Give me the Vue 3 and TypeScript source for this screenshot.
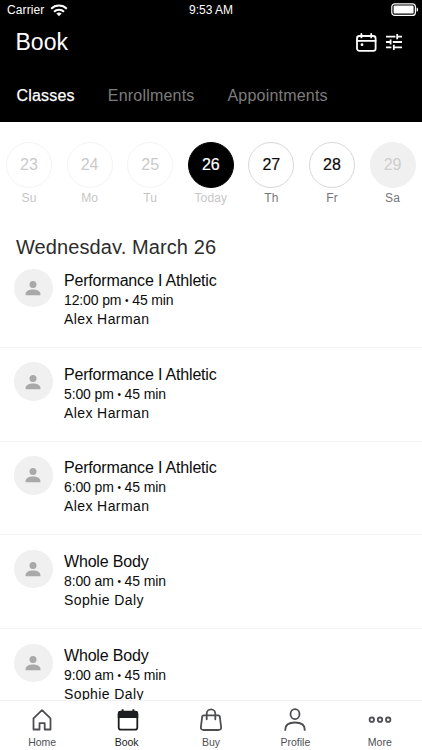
<script setup lang="ts">
interface Day { n: number; label: string; state: 'past' | 'today' | 'open' | 'closed' }
interface Session { title: string; time: string; coach: string }

const days: Day[] = [
  { n: 23, label: 'Su', state: 'past' },
  { n: 24, label: 'Mo', state: 'past' },
  { n: 25, label: 'Tu', state: 'past' },
  { n: 26, label: 'Today', state: 'today' },
  { n: 27, label: 'Th', state: 'open' },
  { n: 28, label: 'Fr', state: 'open' },
  { n: 29, label: 'Sa', state: 'closed' },
]
const sessions: Session[] = [
  { title: 'Performance I Athletic', time: '12:00 pm', coach: 'Alex Harman' },
  { title: 'Performance I Athletic', time: '5:00 pm', coach: 'Alex Harman' },
  { title: 'Performance I Athletic', time: '6:00 pm', coach: 'Alex Harman' },
  { title: 'Whole Body', time: '8:00 am', coach: 'Sophie Daly' },
  { title: 'Whole Body', time: '9:00 am', coach: 'Sophie Daly' },
]
const tabs = ['Home', 'Book', 'Buy', 'Profile', 'More']
</script>

<template>
  <div class="screen">
    <header class="top">
      <div class="status">
        <div class="carrier">
          <span>Carrier</span>
          <svg width="18" height="13" viewBox="0 0 18 13" fill="none" stroke="#fff" stroke-width="2">
            <path d="M1.2 4.7a11.2 11.2 0 0 1 15.6 0" />
            <path d="M4 7.8a7.2 7.2 0 0 1 10 0" />
            <path d="M9 12.2L6.4 9.6a3.8 3.8 0 0 1 5.2 0z" fill="#fff" stroke="none" />
          </svg>
        </div>
        <span class="clock">9:53 AM</span>
        <svg class="battery" width="28" height="14" viewBox="0 0 28 14">
          <rect x="0.8" y="0.8" width="23.6" height="11.6" rx="3" fill="none" stroke="#fff" stroke-width="1.2" />
          <rect x="2.6" y="2.6" width="20" height="8" rx="1.2" fill="#fff" />
          <path d="M25.6 4.4c2 .6 2 3.8 0 4.4z" fill="#fff" />
        </svg>
      </div>
      <div class="titlebar">
        <h1>Book</h1>
        <div class="actions">
          <svg width="21" height="19" viewBox="0 0 21 19" fill="none" stroke="#fff" stroke-width="1.8" stroke-linecap="round">
            <rect x="1" y="3" width="18.6" height="14.8" rx="2.4" />
            <path d="M1 7.800h18.600M5.400 1v3.400M15.200 1v3.400" />
            <circle cx="6" cy="11.700" r="1.400" fill="#fff" stroke="none" />
          </svg>
          <svg width="18" height="18" viewBox="0 0 18 18" fill="none" stroke="#fff" stroke-width="1.800">
            <path d="M1 3.600h9.400M12.200 1v5.200M12.200 3.600H17M1 9h4.500M5.600 6.400v5.200M7.800 9H17M1 14.400h5.400M8.800 11.800V17M8.800 14.400H17" />
          </svg>
        </div>
      </div>
      <nav class="kinds">
        <span class="active">Classes</span>
        <span>Enrollments</span>
        <span>Appointments</span>
      </nav>
    </header>

    <section class="days">
      <div v-for="d in days" :key="d.n" class="day" :class="d.state">
        <div class="num">{{ d.n }}</div>
        <div class="lbl">{{ d.label }}</div>
      </div>
    </section>

    <h2>Wednesday, March 26</h2>

    <main class="list">
      <article v-for="(s, i) in sessions" :key="i" class="row">
        <div class="avatar">
          <svg width="16" height="16" viewBox="0 0 16 16" fill="#a9a9a9">
            <circle cx="8" cy="4.400" r="3.500" />
            <path d="M.6 15.200v-1.500C.6 11 4.600 9.500 8 9.500s7.400 1.500 7.400 4.200v1.500z" />
          </svg>
        </div>
        <div class="info">
          <div class="name">{{ s.title }}</div>
          <div class="time">{{ s.time }} <span class="dot">•</span> 45 min</div>
          <div class="coach">{{ s.coach }}</div>
        </div>
      </article>
    </main>

    <nav class="tabs">
      <div v-for="t in tabs" :key="t" class="tab" :class="{ on: t === 'Book' }">
        <svg width="24" height="24" viewBox="0 0 24 24" fill="none" stroke="currentColor" stroke-width="1.8" stroke-linejoin="round">
          <path v-if="t === 'Home'" d="M3.500 10.400L12 2.200l8.500 8.200V21.500h-5.800v-6.300H9.500v6.300h-6z" />
          <g v-else-if="t === 'Book'">
            <rect x="3.700" y="3.700" width="18.600" height="18" rx="2.200" />
            <path d="M2.800 10V5.400q0-2.400 2.400-2.400h15.600q2.400 0 2.400 2.400V10zM6.600 1.200h2V4h-2zM17.400 1.200h2V4h-2z" fill="currentColor" stroke="none" />
          </g>
          <g v-else-if="t === 'Buy'" stroke-linecap="round">
            <path d="M4.600 7.300h14.800q1.200 0 1.400 1.200l1.300 10.500q.3 3-2.700 3H4.600q-3 0-2.700-3L3.200 8.500q.2-1.200 1.400-1.200z" />
            <path d="M7.700 11.300V5.600a4.300 4.300 0 0 1 8.600 0v5.700" />
          </g>
          <g v-else-if="t === 'Profile'">
            <ellipse cx="12" cy="6.200" rx="4.500" ry="5" />
            <path d="M2.300 22.800v-1.300c0-5.200 4.400-7 9.700-7s9.700 1.800 9.700 7v1.300" />
          </g>
          <g v-else>
            <circle cx="3.800" cy="11.700" r="2.200" /><circle cx="12" cy="11.700" r="2.200" /><circle cx="20.200" cy="11.700" r="2.200" />
          </g>
        </svg>
        <span>{{ t }}</span>
      </div>
    </nav>
  </div>
</template>

<style>
body { margin: 0; background: #fff; overflow: hidden; }
</style>

<style scoped>
* { box-sizing: border-box; }
svg { display: block; }
.screen { width: 422px; height: 750px; display: flex; flex-direction: column; overflow: hidden; background: #fff; color: #0c0c0c; font-family: "Liberation Sans", Arial, sans-serif; }
.top { flex: none; height: 122px; background: #000; color: #fff; }
.status { height: 20px; display: grid; grid-template-columns: 1fr auto 1fr; align-items: center; padding: 0 3px 0 7px; font-size: 12px; }
.carrier { display: flex; align-items: center; gap: 6px; letter-spacing: 0.1px; }
.clock { margin-left: -4px; }
.battery { justify-self: end; }
.titlebar { height: 44px; display: flex; align-items: center; justify-content: space-between; padding: 0 19px 0 15.5px; }
h1 { margin: 0; font-size: 23px; font-weight: 400; line-height: 44px; }
.actions { display: flex; align-items: center; gap: 8.5px; }
.kinds { display: flex; height: 64px; padding-left: 16.500px; gap: 33px; font-size: 16px; line-height: 64px; letter-spacing: 0.2px; color: #7d7d7d; }
.kinds .active { color: #fff; -webkit-text-stroke: 0.25px #fff; }
.days { flex: none; height: 112px; display: flex; gap: 14.600px; padding: 19.500px 0 0 6px; }
.day { flex: none; width: 46px; display: flex; flex-direction: column; align-items: center; }
.num { width: 46px; height: 46px; border-radius: 50%; border: 1px solid #d8d8d8; display: flex; align-items: center; justify-content: center; font-size: 16px; }
.lbl { margin-top: 2.500px; font-size: 12px; line-height: 16px; color: #777; letter-spacing: 0.1px; }
.past .num { border-color: #f4f4f4; color: #cacaca; }
.past .lbl, .today .lbl { color: #c6c6c6; }
.today .num { background: #000; border-color: #000; color: #fff; -webkit-text-stroke: 0.2px #fff; }
.closed .num { background: #f0f0f0; border-color: #f0f0f0; color: #cecece; }
.open .num { -webkit-text-stroke: 0.2px #0c0c0c; }
h2 { flex: none; margin: 0; height: 20px; overflow: hidden; padding-left: 16px; font-size: 20px; font-weight: 400; line-height: 26px; letter-spacing: 0.1px; color: #2c2c2c; }
.list { flex: 1; min-height: 0; overflow: hidden; }
.row { height: 93.750px; padding: 14.700px 0 0 14px; display: flex; gap: 11.500px; border-bottom: 1px solid #f3f3f3; }
.avatar { flex: none; width: 38.500px; height: 38.500px; border-radius: 50%; background: #f0f0f0; display: flex; align-items: center; justify-content: center; }
.info { white-space: nowrap; padding-top: 2.300px; }
.name { font-size: 16px; line-height: 20px; letter-spacing: -0.18px; }
.time { font-size: 14px; line-height: 19px; letter-spacing: -0.13px; }
.dot { font-size: 10px; line-height: 1; vertical-align: 1px; }
.coach { font-size: 14px; line-height: 19px; letter-spacing: 0.4px; }
.tabs { flex: none; height: 50px; display: flex; border-top: 1px solid #f1f1f1; background: #fff; }
.tab { flex: 1; display: flex; flex-direction: column; align-items: center; padding-top: 7px; color: #4d4e52; font-size: 10.500px; line-height: 12px; gap: 4px; }
.on { color: #1d1e22; }
</style>
